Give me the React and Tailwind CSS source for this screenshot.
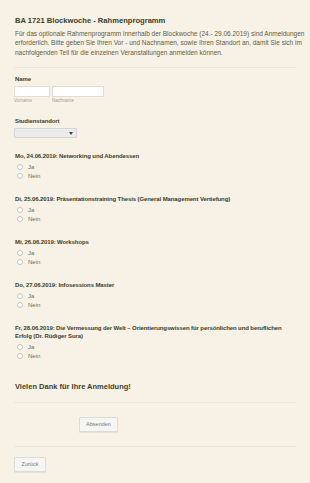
import React from "react";

const sessions = [
  { title: ["Mo, 24.06.2019: Networking und Abendessen"] },
  { title: ["Di, 25.06.2019: Präsentationstraining Thesis (General Management Vertiefung)"] },
  { title: ["Mi, 26.06.2019: Workshops"] },
  { title: ["Do, 27.06.2019: Infosessions Master"] },
  {
    title: [
      "Fr, 28.06.2019: Die Vermessung der Welt – Orientierungswissen für persönlichen und beruflichen",
      "Erfolg (Dr. Rüdiger Sura)",
    ],
  },
];

const Radio = ({ label }) => (
  <label className="flex items-center h-[9px] pl-[3px] gap-[5px]">
    <span className="w-[6px] h-[6px] rounded-full border border-[#c4c4c0] bg-white shrink-0"></span>
    <span className="text-[6px] leading-[8px] text-[#6d6d58]">{label}</span>
  </label>
);

const Divider = () => <div className="h-px bg-[#efe6d6]"></div>;

const App = () => {
  return (
    <div
      className="min-h-[483px] bg-[#f8f1e6] px-[14px] pt-[16px] pb-[10px]"
      style={{ fontFamily: '"Liberation Sans", Arial, sans-serif' }}
    >
      {/* Header */}
      <h1 className="text-[7.6px] leading-[10px] font-bold text-[#3e3e1e] pl-px">
        BA 1721 Blockwoche - Rahmenprogramm
      </h1>
      <p className="mt-[2.5px] text-[6.5px] leading-[9.5px] text-[#5f5f42] pl-px whitespace-nowrap">
        Für das optionale Rahmenprogramm innerhalb der Blockwoche (24.- 29.06.2019) sind Anmeldungen
        <br />
        erforderlich. Bitte geben Sie Ihren Vor - und Nachnamen, sowie Ihren Standort an, damit Sie sich im
        <br />
        nachfolgenden Teil für die einzelnen Veranstaltungen anmelden können.
      </p>

      <div className="mt-[10px]">
        <Divider />
      </div>

      {/* Name */}
      <div className="mt-[7px] pl-px text-[6px] leading-[8px] tracking-[-0.1px] font-bold text-[#3e3e1e]">Name</div>
      <div className="mt-[3px] flex gap-[2px]">
        <div className="flex flex-col">
          <div className="w-[36px] h-[11px] bg-white border border-[#e2ddd2]"></div>
          <span className="mt-[1px] text-[4.5px] leading-[6px] text-[#a3a38a]">Vorname</span>
        </div>
        <div className="flex flex-col">
          <div className="w-[52px] h-[11px] bg-white border border-[#e2ddd2]"></div>
          <span className="mt-[1px] text-[4.5px] leading-[6px] text-[#a3a38a]">Nachname</span>
        </div>
      </div>

      {/* Studienstandort */}
      <div className="mt-[13px] pl-px text-[6px] leading-[8px] tracking-[-0.1px] font-bold text-[#3e3e1e]">Studienstandort</div>
      <div className="mt-[3px] w-[63px] h-[10px] bg-[#ececec] border border-[#d6d6d2] rounded-[1px] flex items-center justify-end pr-[3px]">
        <svg width="4" height="3" viewBox="0 0 4 3">
          <path d="M0 0 L4 0 L2 3 Z" fill="#444" />
        </svg>
      </div>

      {/* Sessions */}
      <div className="mt-[14px] flex flex-col gap-[15px]">
        {sessions.map((s, i) => (
          <div key={i}>
            <div className="pl-px text-[6px] leading-[8px] tracking-[-0.1px] font-bold text-[#3e3e1e]">
              {s.title.map((t, j) => (
                <div key={j}>{t}</div>
              ))}
            </div>
            <div className="mt-[2px]">
              <Radio label="Ja" />
              <Radio label="Nein" />
            </div>
          </div>
        ))}
      </div>

      <div className="mt-[22px] pl-px text-[7.5px] leading-[10px] font-bold text-[#3e3e1e]">
        Vielen Dank für Ihre Anmeldung!
      </div>

      <div className="mt-[10px]">
        <Divider />
      </div>

      <div className="mt-[14px] pl-[65px]">
        <button className="block w-[39px] h-[15px] bg-[#f5f5f3] border border-[#dcdcd6] rounded-[1px] shadow-[0_1px_1px_rgba(0,0,0,0.06)] text-[5.5px] leading-[13px] text-[#7b7b6a]">
          Absenden
        </button>
      </div>

      <div className="mt-[14px]">
        <Divider />
      </div>

      <div className="mt-[10px]">
        <button className="block w-[32px] h-[15px] bg-[#f5f5f3] border border-[#dcdcd6] rounded-[1px] shadow-[0_1px_1px_rgba(0,0,0,0.06)] text-[5.5px] leading-[13px] text-[#7b7b6a]">
          Zurück
        </button>
      </div>
    </div>
  );
};

export default App;
